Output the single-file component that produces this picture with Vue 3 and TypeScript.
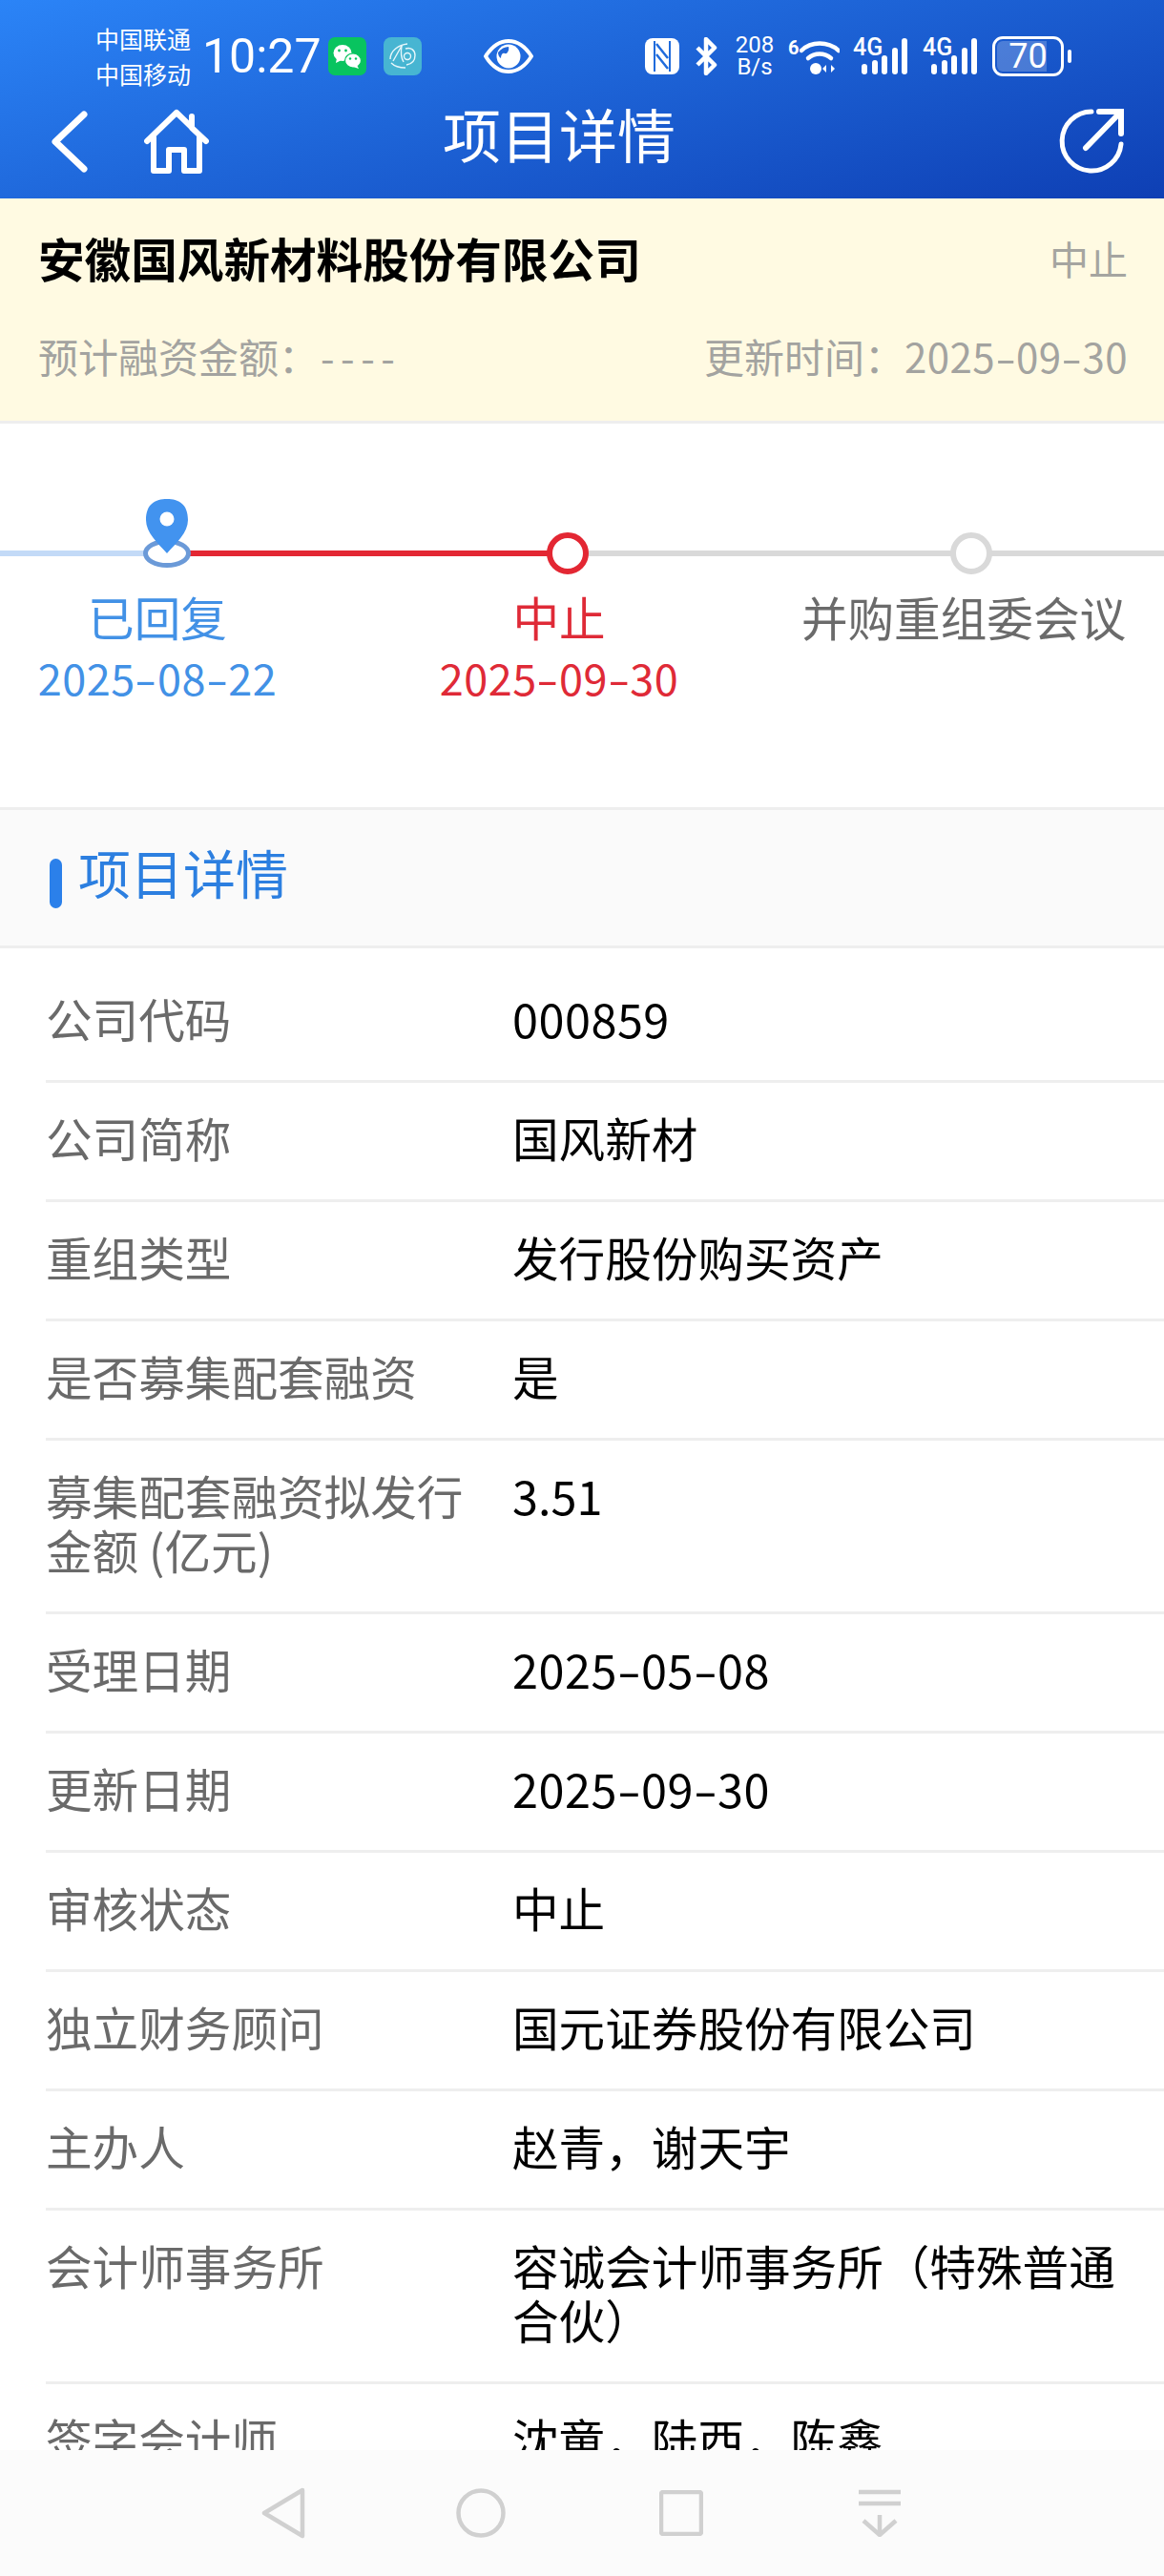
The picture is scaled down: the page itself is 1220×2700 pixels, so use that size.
<script setup lang="ts">
interface Row { label: string; value: string }
const rows: Row[] = [
  { label: '公司代码', value: '000859' },
  { label: '公司简称', value: '国风新材' },
  { label: '重组类型', value: '发行股份购买资产' },
  { label: '是否募集配套融资', value: '是' },
  { label: '募集配套融资拟发行金额 (亿元)', value: '3.51' },
  { label: '受理日期', value: '2025-05-08' },
  { label: '更新日期', value: '2025-09-30' },
  { label: '审核状态', value: '中止' },
  { label: '独立财务顾问', value: '国元证券股份有限公司' },
  { label: '主办人', value: '赵青，谢天宇' },
  { label: '会计师事务所', value: '容诚会计师事务所（特殊普通合伙）' },
  { label: '签字会计师', value: '沈童，陆西，陈鑫' },
]
const steps = [
  { name: '已回复', date: '2025-08-22', cls: 'done' },
  { name: '中止', date: '2025-09-30', cls: 'stop' },
  { name: '并购重组委会议', date: '', cls: 'next' },
]
const bars = [11, 15, 20, 28, 38]
const parts = (s: string): string[] => s.split(/(-)/).filter(Boolean)
const isNum = (s: string): boolean => /^[\d-]+$/.test(s)
</script>

<template>
  <div class="page">
    <header class="top">
      <div class="status">
        <div class="carrier"><span>中国联通</span><span>中国移动</span></div>
        <span class="time">10:27</span>
        <svg class="app" width="40" height="40" viewBox="0 0 40 40">
          <rect width="40" height="40" rx="7" fill="#08c45f" />
          <ellipse cx="15" cy="16.5" rx="9.5" ry="8.5" fill="#fff" />
          <path d="M9 22l-1 5 6-3z" fill="#fff" />
          <ellipse cx="26" cy="24.5" rx="8.5" ry="7.5" fill="#fff" stroke="#08c45f" stroke-width="1.2" />
          <path d="M30 29l2 4-6-2z" fill="#fff" />
          <circle cx="11.5" cy="14" r="1.4" fill="#08c45f" /><circle cx="18.5" cy="14" r="1.4" fill="#08c45f" />
          <circle cx="23" cy="22.5" r="1.2" fill="#08c45f" /><circle cx="29" cy="22.5" r="1.2" fill="#08c45f" />
        </svg>
        <svg class="app app2" width="40" height="40" viewBox="0 0 40 40">
          <rect width="40" height="40" rx="8" fill="#47b5d2" />
          <g fill="none" stroke="#e8f7fb" stroke-width="1.4">
            <path d="M7 23C7 14 16 8 25 7" />
            <path d="M19 9L10 25" />
            <path d="M19 9c-1 6-1 12 2 17" />
            <circle cx="25" cy="20" r="3.5" />
            <path d="M23 12c6-2 10 2 10 7 0 6-3 9-9 10" />
            <path d="M8 27c4 4 9 5 15 5" />
          </g>
        </svg>
        <svg class="eye" width="52" height="36" viewBox="0 0 52 36">
          <path d="M2 18C9 7 17 2 26 2s17 5 24 16c-7 11-15 16-24 16S9 29 2 18z" fill="none" stroke="#fff" stroke-width="4" />
          <circle cx="26" cy="18" r="12.5" fill="#fff" />
          <path d="M15 14c3-4 7-6 11-6 1 3-1 8-4 7-2-1-4 1-4 5-2-1-3-4-3-6z" fill="#2066d8" />
        </svg>
        <div class="sys">
          <svg width="36" height="38" viewBox="0 0 36 38">
            <rect width="36" height="38" rx="8" fill="#fff" />
            <path d="M10 3v32M26 3v32" stroke="#1f6bdc" stroke-width="2" />
            <path d="M12 6l12 15M12 17l12 15" stroke="#1f6bdc" stroke-width="2.5" fill="none" />
          </svg>
          <svg class="bt" width="24" height="40" viewBox="0 0 24 40">
            <path d="M3 11l18 18-9 9V2l9 9-18 18" fill="none" stroke="#fff" stroke-width="4.5" stroke-linejoin="round" />
          </svg>
          <div class="speed"><span>208</span><span>B/s</span></div>
          <div class="wifi">
            <span class="six">6</span>
            <svg width="42" height="40" viewBox="0 0 42 40">
              <path d="M2 14C12 4 30 4 41 14" fill="none" stroke="#fff" stroke-width="4.5" stroke-linecap="round" />
              <path d="M9 22c7-6 17-6 24 0" fill="none" stroke="#fff" stroke-width="4.5" stroke-linecap="round" />
              <circle cx="17" cy="33" r="6" fill="#fff" />
              <path d="M28 29v8l-4-4zM33 29v8l4-4z" fill="#fff" />
            </svg>
          </div>
          <div v-for="n in 2" :key="n" class="sig">
            <span class="g">4G</span>
            <div class="bars"><i v-for="b in bars" :key="b" :style="{ height: b + 'px' }"></i></div>
          </div>
          <div class="batt"><i class="fill"></i><span>70</span></div>
          <i class="nub"></i>
        </div>
      </div>
      <div class="nav">
        <svg class="back" width="41" height="67" viewBox="0 0 41 67">
          <path d="M36 5L6 33.5 36 62" fill="none" stroke="#fff" stroke-width="7" stroke-linecap="round" stroke-linejoin="round" />
        </svg>
        <svg class="home" width="68" height="68" viewBox="0 0 68 68">
          <path d="M3 34L34 4l16 15.5V8M50 20l15 14M10 30v35h16V43h16v22h16V30" fill="none" stroke="#fff" stroke-width="6" stroke-linejoin="round" stroke-linecap="round" />
        </svg>
        <h1>项目详情</h1>
        <svg class="share" width="68" height="70" viewBox="0 0 68 70">
          <path d="M34 4A31 31 0 1 0 65 38" fill="none" stroke="#fff" stroke-width="5" stroke-linecap="round" />
          <path d="M28 42L64 5M42 4h23v23" fill="none" stroke="#fff" stroke-width="6" stroke-linecap="round" />
        </svg>
      </div>
    </header>

    <section class="summary">
      <div class="line">
        <strong>安徽国风新材料股份有限公司</strong>
        <span class="state">中止</span>
      </div>
      <div class="line meta">
        <span>预计融资金额：<span class="empty">----</span></span>
        <span>更新时间：<span class="num"><span v-for="(p, i) in parts('2025-09-30')" :key="i" :class="{ dash: p === '-' }">{{ p }}</span></span></span>
      </div>
    </section>

    <section class="timeline">
      <div class="track">
        <i class="seg seg-a"></i><i class="seg seg-b"></i><i class="seg seg-c"></i>
        <svg class="tl-icon" width="1220" height="90" viewBox="0 0 1220 90">
          <ellipse cx="175" cy="57" rx="22.5" ry="12.5" fill="#fff" stroke="#6b9ad8" stroke-width="5" />
          <path d="M175 0c12 0 22 5 22 22 0 13-12 24-22 35-10-11-22-22-22-35 0-17 10-22 22-22z" fill="#4293ef" />
          <ellipse cx="175" cy="21" rx="7.5" ry="7.5" fill="#fff" />
          <circle cx="595" cy="57" r="19" fill="#fff" stroke="#e32733" stroke-width="6" />
          <circle cx="1018" cy="57" r="19" fill="#fff" stroke="#d9d9d9" stroke-width="6" />
        </svg>
      </div>
      <div class="steps">
        <div v-for="s in steps" :key="s.name" class="step" :class="s.cls">
          <span class="s-name">{{ s.name }}</span>
          <span class="s-date num"><span v-for="(p, i) in parts(s.date)" :key="i" :class="{ dash: p === '-' }">{{ p }}</span></span>
        </div>
      </div>
    </section>

    <section class="head">
      <i class="mark"></i>
      <h2>项目详情</h2>
    </section>

    <section class="list">
      <div v-for="r in rows" :key="r.label" class="row">
        <span class="lab">{{ r.label }}</span>
        <span class="val" :class="{ num: isNum(r.value) }"><span v-for="(p, i) in parts(r.value)" :key="i" :class="{ dash: p === '-' }">{{ p }}</span></span>
      </div>
    </section>

    <footer class="softkeys">
      <svg width="46" height="54" viewBox="0 0 46 54"><path d="M43 3L3 27l40 24z" fill="none" stroke="#d0d0d0" stroke-width="4.5" stroke-linejoin="round" /></svg>
      <svg class="k2" width="52" height="52" viewBox="0 0 52 52"><circle cx="26" cy="26" r="23.5" fill="none" stroke="#d0d0d0" stroke-width="4.5" /></svg>
      <svg class="k3" width="46" height="48" viewBox="0 0 46 48"><rect x="2" y="2" width="42" height="44" rx="2" fill="none" stroke="#d0d0d0" stroke-width="4.5" /></svg>
      <svg class="k4" width="44" height="50" viewBox="0 0 44 50"><path d="M0 3h44M0 15h44M22 27v21M5 33l17 15 17-15" fill="none" stroke="#d0d0d0" stroke-width="4.5" /></svg>
    </footer>
  </div>
</template>

<style>
html, body { margin: 0; background: #fff; }
</style>

<style scoped>
.page {
  position: relative;
  width: 1220px;
  height: 2700px;
  overflow: hidden;
  background: #fff;
  font-family: "Noto Sans CJK SC", "Noto Sans", sans-serif;
}
.num { letter-spacing: 0.5px; }
.dash {
  display: inline-block;
  margin: 0 0.08em;
  transform: scaleX(1.5);
}
.top {
  height: 208px;
  box-sizing: border-box;
  color: #fff;
  background: linear-gradient(165deg, #2b84f7 0%, #1e65d8 45%, #0e3fb4 100%);
}
.status {
  display: flex;
  align-items: center;
  height: 108px;
  padding: 10px 0 0 100px;
  box-sizing: border-box;
}
.carrier {
  display: flex;
  flex-direction: column;
  width: 112px;
  font-size: 25px;
  line-height: 37px;
}
.time {
  width: 132px;
  font-family: "Roboto", sans-serif;
  font-size: 50px;
  line-height: 60px;
}
.app2 { margin-left: 18px; }
.eye { margin-left: 65px; }
.sys {
  display: flex;
  align-items: center;
  margin-left: 117px;
}
.bt { margin-left: 16px; }
.speed {
  display: flex;
  flex-direction: column;
  align-items: center;
  width: 44px;
  margin-left: 17px;
  font-family: "Roboto", sans-serif;
  font-size: 24px;
  line-height: 23px;
}
.wifi {
  display: flex;
  align-items: flex-start;
  margin-left: 13px;
}
.six {
  width: 12px;
  font-family: "Roboto", sans-serif;
  font-size: 20px;
  line-height: 22px;
  font-weight: 700;
}
.sig {
  position: relative;
  display: flex;
  justify-content: flex-end;
  width: 57px;
  height: 38px;
  margin-left: 14px;
}
.sig + .sig { margin-left: 16px; }
.g {
  position: absolute;
  left: 0;
  top: -3px;
  font-family: "Roboto", sans-serif;
  font-size: 25px;
  line-height: 26px;
  font-weight: 500;
}
.bars {
  display: flex;
  align-items: flex-end;
  gap: 4.5px;
  height: 38px;
}
.bars i {
  display: block;
  width: 6px;
  border-radius: 3px;
  background: #fff;
}
.batt {
  position: relative;
  width: 75px;
  height: 42px;
  margin-left: 16px;
  box-sizing: border-box;
  border: 3px solid #fff;
  border-radius: 11px;
  text-align: center;
  font-family: "Roboto", sans-serif;
  font-size: 36px;
  line-height: 37px;
  overflow: hidden;
}
.batt span { position: relative; }
.fill {
  position: absolute;
  left: 2px;
  top: 2px;
  bottom: 2px;
  width: 75%;
  border-radius: 6px 0 0 6px;
  background: rgba(255, 255, 255, 0.22);
}
.nub {
  width: 4px;
  height: 14px;
  margin-left: 4px;
  border-radius: 2px;
  background: #fff;
}
.nav {
  position: relative;
  display: flex;
  align-items: center;
  height: 80px;
  padding-left: 52px;
}
.home { margin-left: 58px; }
.share { margin-left: auto; margin-right: 42px; }
h1 {
  position: absolute;
  left: 0;
  right: 48px;
  top: -6px;
  margin: 0;
  text-align: center;
  font-size: 61px;
  font-weight: 400;
  line-height: 76px;
}
.summary {
  height: 236px;
  box-sizing: border-box;
  padding: 33px 38px 0 40px;
  background: #fffae2;
  border-bottom: 3px solid #eeeeee;
}
.line {
  display: flex;
  justify-content: space-between;
  align-items: center;
  height: 58px;
}
.line strong {
  font-size: 48.6px;
  font-weight: 700;
  color: #000;
}
.state { font-size: 41px; color: #a5a5a0; }
.meta {
  margin-top: 44px;
  font-size: 42px;
  color: #a3a3a0;
}
.empty {
  margin-left: 2px;
  letter-spacing: 6.5px;
}
.timeline {
  height: 405px;
  box-sizing: border-box;
  padding-top: 79px;
  border-bottom: 3px solid #eeeeee;
}
.track {
  position: relative;
  height: 90px;
}
.seg {
  position: absolute;
  top: 54px;
  height: 6px;
}
.seg-a { left: 0; width: 160px; background: #c3daf7; }
.seg-b { left: 190px; width: 390px; background: #e32733; }
.seg-c { left: 610px; right: 0; background: #d9d9d9; }
.tl-icon { position: absolute; left: 0; top: 0; }
.steps {
  display: grid;
  grid-template-columns: 372px 428px 420px;
}
.step {
  display: flex;
  flex-direction: column;
  align-items: center;
}
.step.done { padding-right: 42px; color: #4291e6; }
.step.stop { color: #df2a37; }
.step.next { color: #6b6b6b; }
.s-name { font-size: 48.6px; line-height: 66px; }
.s-date { font-size: 45px; line-height: 62px; }
.head {
  display: flex;
  align-items: center;
  height: 145px;
  box-sizing: border-box;
  padding-left: 52px;
  background: #fafafa;
  border-bottom: 3px solid #eeeeee;
}
.mark {
  width: 13px;
  height: 52px;
  border-radius: 7px;
  background: #2b80ea;
  margin-top: 12px;
}
h2 {
  margin: -14px 0 0 17px;
  font-size: 55px;
  line-height: 70px;
  font-weight: 400;
  color: #2c7fe0;
}
.list { padding: 16px 0 0 48px; }
.row {
  display: grid;
  grid-template-columns: 489px 640px;
  padding: 29px 0 36px;
  border-bottom: 3px solid #eeeeee;
  font-size: 48.6px;
  line-height: 57px;
}
.lab { color: #6a6a6a; padding-right: 30px; }
.val { color: #000; }
.softkeys {
  position: absolute;
  left: 0;
  right: 0;
  bottom: 0;
  display: flex;
  align-items: center;
  height: 132px;
  padding-left: 274px;
  box-sizing: border-box;
  background: #fbfbfb;
}
.k2 { margin-left: 158px; }
.k3 { margin-left: 161px; }
.k4 { margin-left: 163px; }
</style>
